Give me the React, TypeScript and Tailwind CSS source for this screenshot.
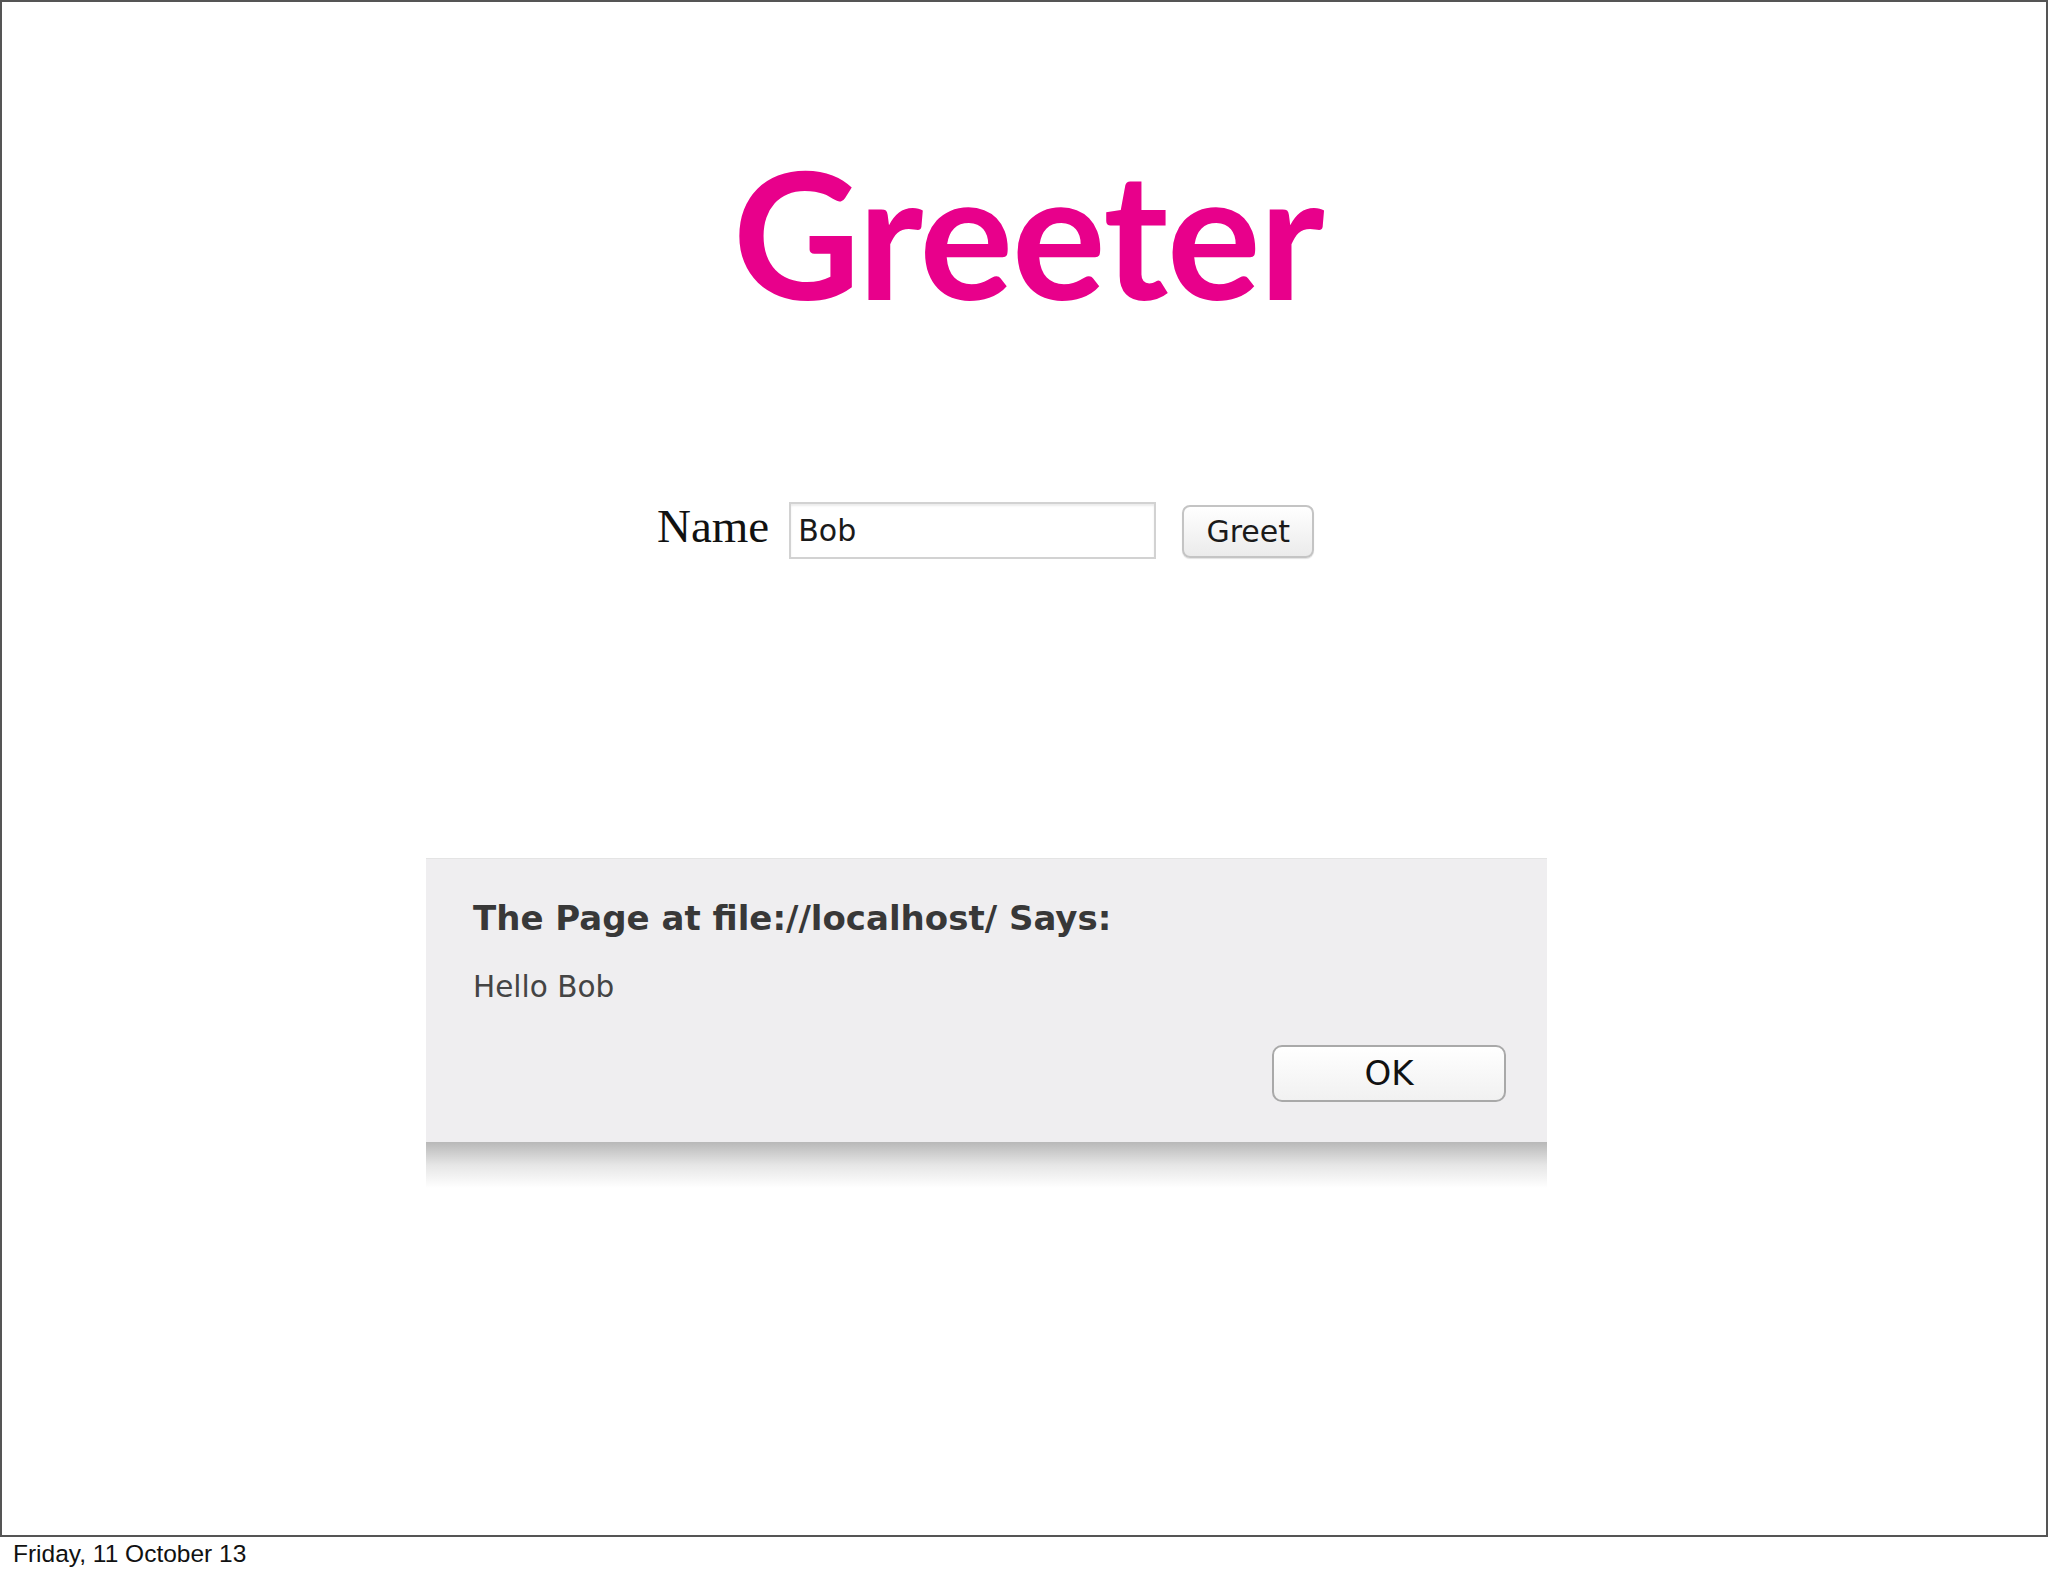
import React, { useState } from 'react'

const sans = "font-['DejaVu_Sans',sans-serif]"

const App: React.FC = () => {
  const [name, setName] = useState('Bob')

  return (
    <div className="w-[2048px] h-[1576px] bg-white overflow-hidden">
      {/* Slide frame */}
      <div className="w-[2048px] h-[1537px] border-2 border-[#555555] flex flex-col">
        {/* Title */}
        <h1 className="mt-[142px] pl-[8px] text-center leading-none text-[176px] tracking-[-1.5px] font-bold text-[#e8008b] font-['Lato',sans-serif]">
          Greeter
        </h1>

        {/* Form row */}
        <div className="mt-[182px] ml-[655px] flex items-start">
          <label className="mt-[1px] leading-none text-[47px] text-[#111] font-['Liberation_Serif',serif]">
            Name
          </label>
          <input
            className={`ml-[20px] w-[367px] h-[57px] px-[7px] border-2 border-[#d2d2d2] shadow-[inset_0_2px_2px_rgba(0,0,0,0.08)] outline-none text-[30px] text-[#1a1a1a] ${sans}`}
            value={name}
            onChange={(e) => setName(e.target.value)}
            spellCheck={false}
          />
          <button
            className={`ml-[26px] mt-[3px] w-[132px] h-[53px] rounded-[8px] border-2 border-[#c4c4c4] bg-linear-to-b from-white to-[#ebebeb] shadow-[0_1px_1px_rgba(0,0,0,0.12)] text-[30px] leading-none text-[#1a1a1a] ${sans}`}
          >
            Greet
          </button>
        </div>

        {/* Alert dialog */}
        <div className="mt-[299px] ml-[424px] w-[1121px] flex flex-col">
          <div className="h-[284px] bg-[#efeef0] border-t border-[#e4e4e4] flex flex-col pl-[47px] pr-[41px] pt-[42px]">
            <div className={`leading-none text-[34px] font-bold text-[#383838] ${sans}`}>
              The Page at file://localhost/ Says:
            </div>
            <div className={`mt-[38px] leading-none text-[29.5px] text-[#444] ${sans}`}>
              Hello {name}
            </div>
            <div className="mt-[42px] flex justify-end">
              <button
                className={`w-[234px] h-[57px] rounded-[10px] border-2 border-[#a9a9a9] bg-linear-to-b from-white to-[#f1f1f1] text-[34px] leading-none text-[#111] ${sans}`}
              >
                OK
              </button>
            </div>
          </div>
          <div className="h-[46px] bg-linear-to-b from-[#b8b8b8] via-[#e6e6e6] to-white"></div>
        </div>
      </div>

      {/* Footer date */}
      <div className="mt-[5px] pl-[13px] leading-none text-[24.5px] text-[#111] font-['Liberation_Sans',Arial,sans-serif]">
        Friday, 11 October 13
      </div>
    </div>
  )
}

export default App
